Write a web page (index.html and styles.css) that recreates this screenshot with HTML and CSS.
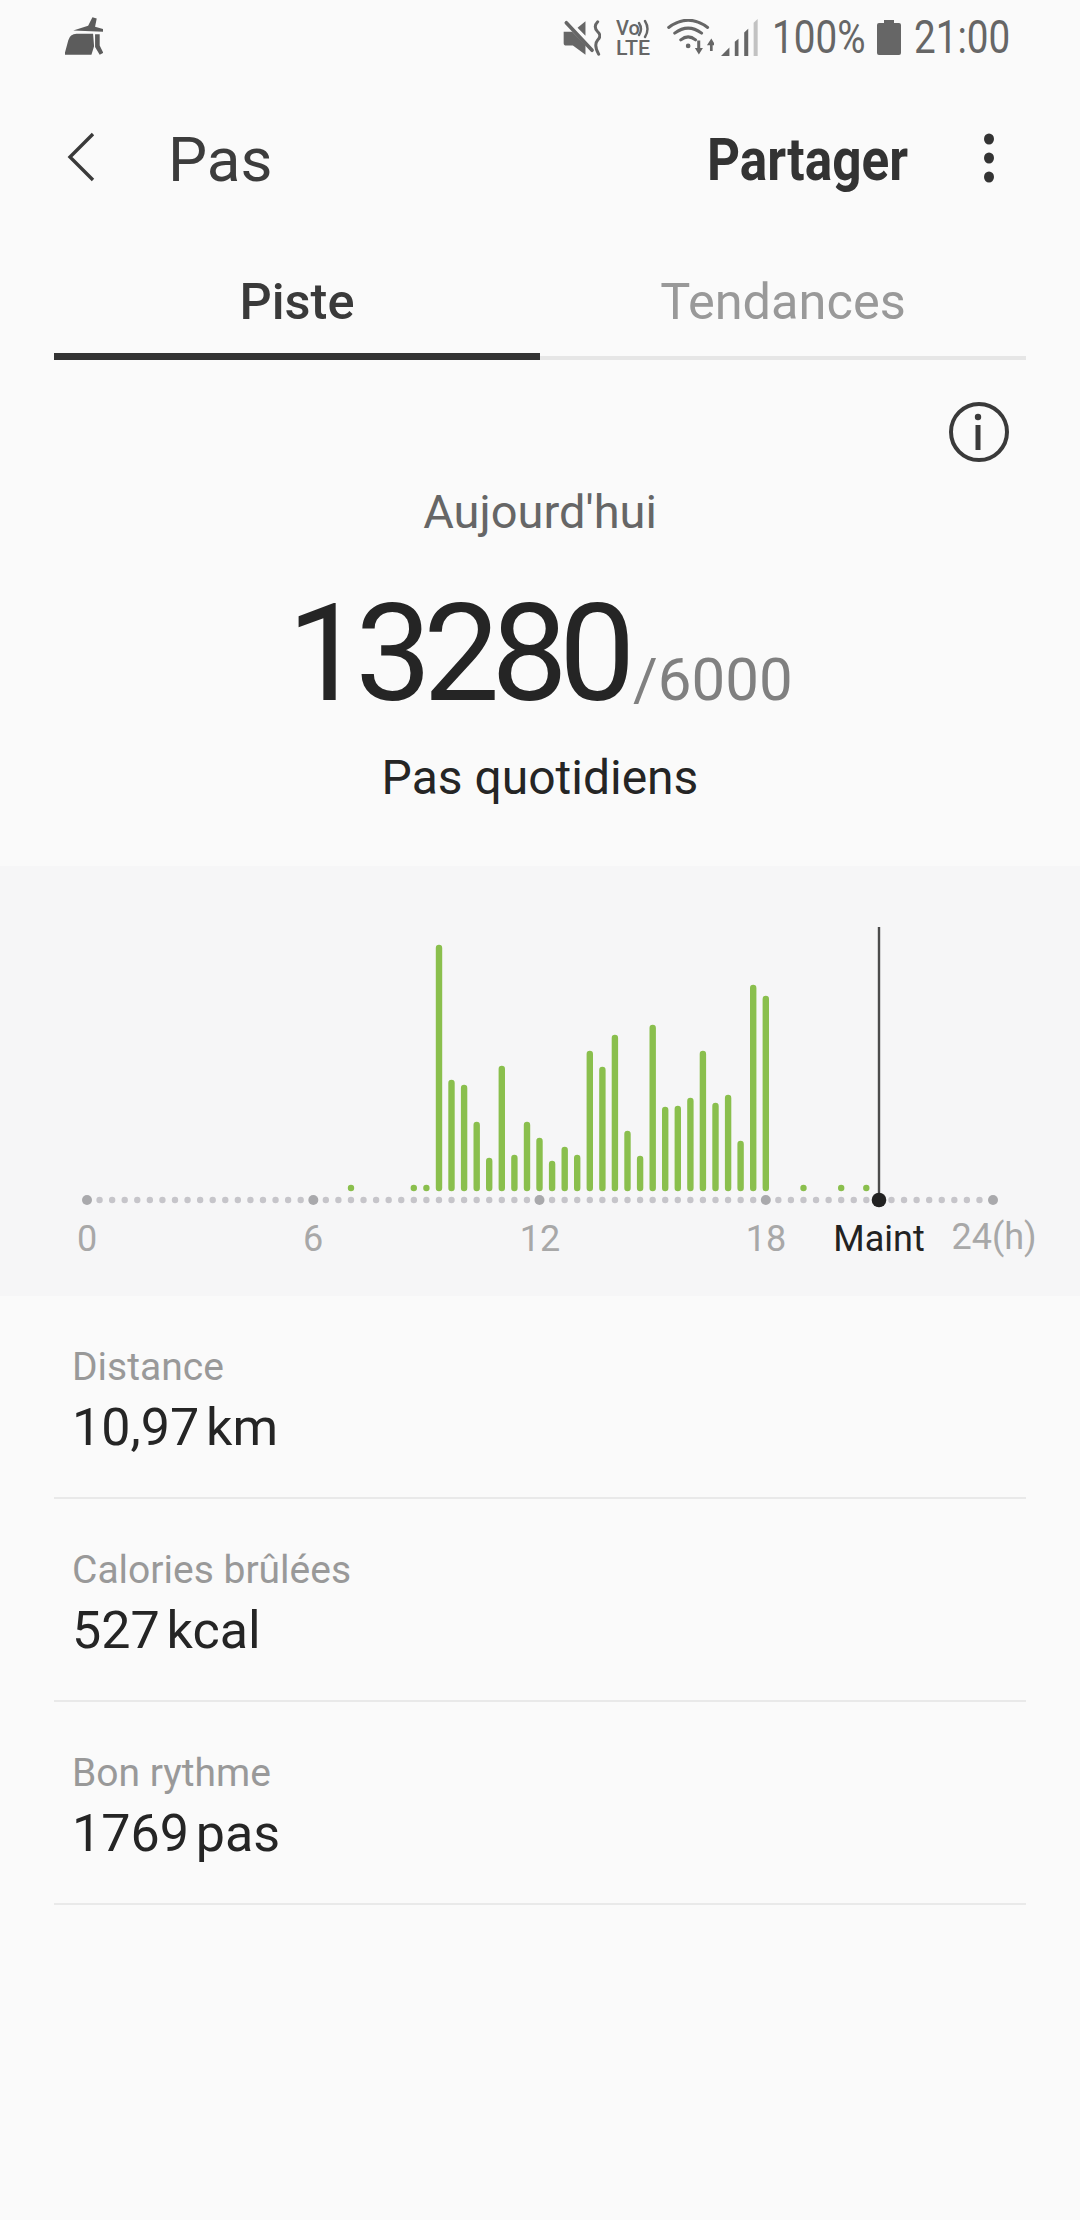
FILE: index.html
```html
<!DOCTYPE html>
<html lang="fr">
<head>
<meta charset="utf-8">
<title>Pas</title>
<link rel="stylesheet" href="styles.css">
</head>
<body>
<div class="page">
  <header class="status">
    <svg class="broom" viewBox="45 22 115 114">
      <path d="M70 62 115 48 128 22 141 26 136 51 160 58V66Z"/>
      <path d="M43 136 55 92Q60 72 80 72H130L133 110 125 136ZM136 74H150V108L161 130 150 136 136 112Z"/>
    </svg>
    <svg class="ic-mute" viewBox="20 25 115 108">
      <path d="M22 60H48L88 100V130L50 102H30Q22 102 22 94ZM64 48 88 28V72Z"/>
      <path class="ln" d="M30 33 108 116" stroke-width="11"/>
      <path class="ln" d="M125 30Q110 45 125 60 138 72 125 85 112 100 128 128" stroke-width="9"/>
    </svg>
    <svg class="ic-volte" viewBox="0 -5 35 46">
      <text class="volte-a" x="0" y="15">Vo</text>
      <path class="ln" d="M23 3Q27 9 23 15M29 1Q34 9 29 17" stroke-width="2.4"/>
      <text class="volte-b" x="0" y="35" textLength="34" lengthAdjust="spacingAndGlyphs">LTE</text>
    </svg>
    <svg class="ic-wifi" viewBox="15 20 140 110">
      <circle cx="78" cy="100" r="7"/>
      <path class="ln" d="M56 82Q78 64 100 82M38 62Q78 32 118 62M20 45Q78 2 136 45" stroke-width="9"/>
      <path d="M105 84H114V106H122L110 126 98 106H105ZM143 115V98H134L147 78 159 98H151V115Z"/>
    </svg>
    <svg class="ic-signal" viewBox="180 20 110 110">
      <path d="M180 130 205 105V130ZM221 130V88L232 79V130ZM249 130V60L261 49V130Z"/>
      <path class="sig-off" d="M277 130V31L289 20V130Z"/>
    </svg>
    <span class="st-text st-batt"><span class="st-inner">100%</span></span>
    <svg class="ic-batt" viewBox="0 0 24 35"><path d="M7 0H17V3H22Q24 3 24 5V33Q24 35 22 35H2Q0 35 0 33V5Q0 3 2 3H7Z"/></svg>
    <span class="st-text st-time"><span class="st-inner">21:00</span></span>
  </header>

  <nav class="appbar">
    <svg class="back" viewBox="0 0 30 50"><path d="M27 2 4 25 27 48"/></svg>
    <h1 class="title">Pas</h1>
    <span class="share"><span class="share-inner">Partager</span></span>
    <svg class="more" viewBox="0 0 12 50"><ellipse cx="6" cy="6" rx="5" ry="5.5"/><ellipse cx="6" cy="25" rx="5" ry="5.5"/><ellipse cx="6" cy="44" rx="5" ry="5.5"/></svg>
  </nav>

  <div class="tabs">
    <div class="tab tab-on">Piste</div>
    <div class="tab">Tendances</div>
  </div>

  <div class="info-row">
    <svg class="info" viewBox="0 0 60 60">
      <circle class="info-ring" cx="30" cy="30" r="28"/>
      <circle cx="29" cy="15" r="3.2"/>
      <rect x="26.5" y="23" width="5" height="25"/>
    </svg>
  </div>

  <section class="summary">
    <div class="today">Aujourd'hui</div>
    <div class="count"><span class="count-big">13280</span><span class="count-goal">/6000</span></div>
    <div class="count-label">Pas quotidiens</div>
  </section>

  <svg class="chart" viewBox="0 866 1080 430" width="1080" height="430">
    <path class="axis" d="M87 1200H993"/>
    <circle class="major" cx="87" cy="1200" r="5"/>
    <circle class="major" cx="313.3" cy="1200" r="5"/>
    <circle class="major" cx="539.5" cy="1200" r="5"/>
    <circle class="major" cx="765.8" cy="1200" r="5"/>
    <circle class="major" cx="993" cy="1200" r="5"/>
    <path class="bars" d="M351 1188v0M413.8 1188v0M426.4 1188v0M439 948V1188M451.5 1083V1188M464.1 1088V1188M476.7 1125V1188M489.2 1161V1188M501.8 1069V1188M514.4 1158V1188M527 1125V1188M539.5 1141V1188M552.1 1164V1188M564.7 1150V1188M577.2 1158V1188M589.8 1054V1188M602.4 1070V1188M614.9 1038V1188M627.5 1134V1188M640.1 1159V1188M652.7 1028V1188M665.2 1110V1188M677.8 1109V1188M690.4 1101V1188M702.9 1054V1188M715.5 1106V1188M728.1 1098V1188M740.6 1144V1188M753.2 988V1188M765.8 999V1188M803.5 1188v0M841.2 1188v0M866.3 1188v0"/>
    <path class="now-line" d="M879 927V1200"/>
    <circle class="now-dot" cx="879" cy="1200" r="7.3"/>
    <text class="tick" x="87" y="1251">0</text>
    <text class="tick" x="313" y="1251">6</text>
    <text class="tick" x="540" y="1251">12</text>
    <text class="tick" x="766" y="1251">18</text>
    <text class="tick tick-now" x="879" y="1251">Maint</text>
    <text class="tick" x="994" y="1249">24(h)</text>
  </svg>

  <section class="stats">
    <div class="stat"><div class="stat-label">Distance</div><div class="stat-value">10,97 km</div></div>
    <div class="stat"><div class="stat-label">Calories brûlées</div><div class="stat-value">527 kcal</div></div>
    <div class="stat"><div class="stat-label">Bon rythme</div><div class="stat-value">1769 pas</div></div>
  </section>
</div>
</body>
</html>
```
FILE: styles.css
```css
* { box-sizing: border-box; }
html, body { margin: 0; padding: 0; }
body { background: #fafafa; font-family: Roboto, "Liberation Sans", sans-serif; color: #252525; }
.page { width: 1080px; height: 2220px; overflow: hidden; background: #fafafa; }

/* status bar */
.status { display: flex; align-items: center; height: 75px; padding: 0 70px 0 65px; fill: #666; }
.status svg { flex: none; display: block; }
.ln { fill: none; stroke: #666; stroke-linecap: round; }
.broom { width: 38px; height: 38px; margin-bottom: 3px; fill: #5c5c5c; }
.ic-mute { width: 38px; height: 36px; margin-left: auto; }
.ic-volte { width: 35px; height: 46px; margin-left: 15px; }
.volte-a { font-size: 20px; font-weight: 500; }
.volte-b { font-size: 21px; font-weight: 500; }
.ic-wifi { width: 47px; height: 37px; margin-left: 16px; }
.ic-signal { width: 37px; height: 37px; margin-left: 7px; }
.sig-off { fill: #c2c2c2; }
.st-text { flex: none; font-size: 46px; line-height: 77px; color: #666; }
.st-inner { display: inline-block; white-space: nowrap; transform: scaleX(.84); transform-origin: left center; }
.st-batt { width: 92px; margin-left: 14px; }
.ic-batt { width: 24px; height: 35px; margin-left: 13px; }
.st-time { width: 96px; margin-left: 13px; }

/* app bar */
.appbar { display: flex; align-items: center; height: 170px; padding: 0 85px 0 66px; }
.back { flex: none; width: 30px; height: 50px; margin-bottom: 6px; fill: none; stroke: #3a3a3a; stroke-width: 3.4; }
.title { margin: 0 0 0 72px; font-size: 62px; font-weight: 400; line-height: 70px; color: #3c3c3c; }
.share { margin-left: auto; margin-right: 79px; width: 197px; font-size: 59px; font-weight: 700; line-height: 70px; color: #333; }
.share-inner { display: inline-block; white-space: nowrap; transform: scaleX(.87); transform-origin: left center; }
.more { flex: none; width: 12px; height: 50px; margin-bottom: 4px; fill: #333; }

/* tabs */
.tabs { display: grid; grid-template-columns: 1fr 1fr; margin: 0 54px; }
.tab { height: 115px; line-height: 114px; text-align: center; font-size: 50.5px; color: #999; border-bottom: 4px solid #e6e6e6; }
.tab-on { font-weight: 500; color: #3a3a3a; border-bottom: 7px solid #333; }

/* info */
.info-row { display: flex; justify-content: flex-end; height: 60px; margin-top: 42px; padding-right: 71px; }
.info { width: 60px; height: 60px; fill: #3a3a3a; }
.info-ring { fill: none; stroke: #3a3a3a; stroke-width: 4; }

/* summary */
.summary { text-align: center; }
.today { margin-top: 20px; font-size: 47px; line-height: 60px; color: #666; }
.count { margin-top: 44px; height: 136px; line-height: 136px; white-space: nowrap; }
.count-big { font-size: 136px; letter-spacing: -8.5px; color: #252525; }
.count-goal { margin-left: 6px; font-size: 60px; line-height: 60px; color: #808080; }
.count-label { margin-top: 26px; font-size: 48px; line-height: 60px; color: #252525; }

/* chart */
.chart { display: block; margin-top: 58px; background: #f6f6f7; }
.axis { fill: none; stroke: #c6c5ca; stroke-width: 6.4; stroke-linecap: round; stroke-dasharray: 0 12.57; }
.major { fill: #a9a9ac; }
.bars { fill: none; stroke: #8abf4d; stroke-width: 6.4; stroke-linecap: round; }
.now-line { fill: none; stroke: #4c4c4c; stroke-width: 2.4; }
.now-dot { fill: #222; }
.tick { font-size: 36px; text-anchor: middle; fill: #a8a8a8; }
.tick-now { fill: #222; }

/* stats */
.stat { height: 203px; margin: 0 54px; padding: 46px 0 0 18px; border-bottom: 2px solid #e9e9e9; }
.stat-label { font-size: 39px; line-height: 50px; color: #999; }
.stat-value { margin-top: 6px; font-size: 52px; word-spacing: -6px; line-height: 60px; color: #252525; }
```
